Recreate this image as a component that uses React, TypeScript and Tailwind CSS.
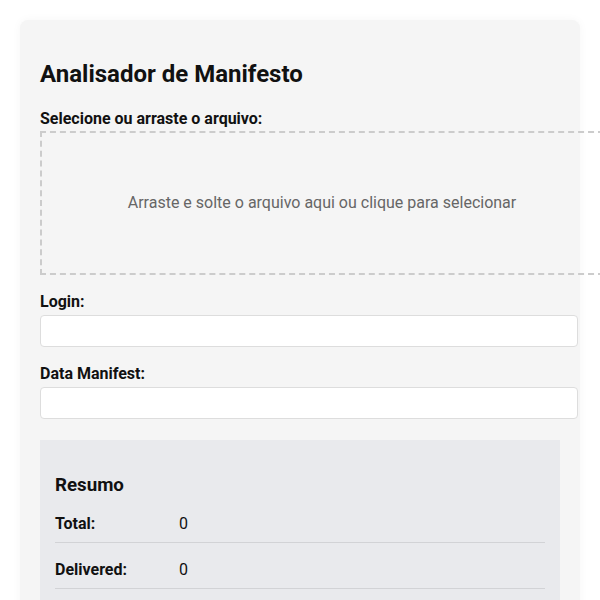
import React from 'react';

interface SummaryRowProps {
  label: string;
  value: number;
}

const SummaryRow: React.FC<SummaryRowProps> = ({ label, value }) => {
  return (
    <div className="flex border-b border-[#d2d3d6] pt-[17px] pb-[9px] text-[16px] leading-[19px]">
      <span className="w-[124px] font-bold">{label}</span>
      <span>{value}</span>
    </div>
  );
};

const FieldLabel: React.FC<{ children: React.ReactNode; className?: string }> = ({ children, className }) => {
  return <label className={`block text-[16px] font-bold leading-[19px] ${className ?? ''}`}>{children}</label>;
};

const App: React.FC = () => {
  return (
    <div
      className="min-h-[600px] w-full overflow-hidden bg-white text-[#111]"
      style={{ fontFamily: 'Roboto, "Liberation Sans", sans-serif' }}
    >
      <div className="mx-[20px] mt-[20px] rounded-[8px] bg-[#f5f5f5] px-[20px] pt-[40px] pb-[20px] shadow-[0_0_10px_rgba(0,0,0,0.04)]">
        <h2 className="mb-[21px] text-[24px] font-bold leading-[28px]">Analisador de Manifesto</h2>

        {/* Upload area */}
        <FieldLabel className="mb-[3px]">Selecione ou arraste o arquivo:</FieldLabel>
        <div className="flex h-[144px] w-[564px] items-center justify-center border-2 border-dashed border-[#cccccc] text-[16px] text-[#666666]">
          Arraste e solte o arquivo aqui ou clique para selecionar
        </div>

        <FieldLabel className="mt-[17px] mb-[4px]">Login:</FieldLabel>
        <input
          type="text"
          className="block h-[32px] w-[538px] rounded-[4px] border border-[#dddddd] bg-white px-[8px] text-[14px] outline-none"
        />

        <FieldLabel className="mt-[17px] mb-[4px]">Data Manifest:</FieldLabel>
        <input
          type="text"
          className="block h-[32px] w-[538px] rounded-[4px] border border-[#dddddd] bg-white px-[8px] text-[14px] outline-none"
        />

        {/* Summary */}
        <div className="mt-[21px] w-[520px] bg-[#e9eaed] px-[15px] pb-[15px]">
          <h3 className="pt-[34px] mb-[1px] text-[18.72px] font-bold leading-[22px]">Resumo</h3>
          <SummaryRow label="Total:" value={0} />
          <SummaryRow label="Delivered:" value={0} />
        </div>
      </div>
    </div>
  );
};

export default App;
